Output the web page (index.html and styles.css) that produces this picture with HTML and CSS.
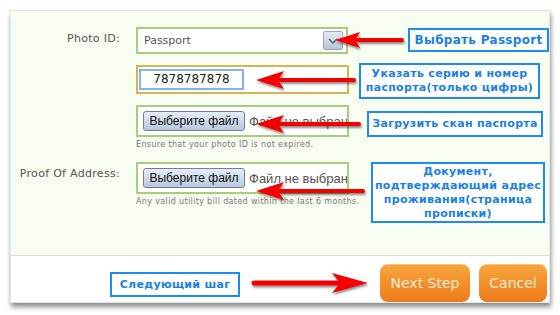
FILE: index.html
```html
<!DOCTYPE html>
<html lang="ru">

<head>
    <meta charset="UTF-8">
    <title>Verification</title>
    <link rel="stylesheet" href="styles.css">
</head>

<body>
    <div class="panel">
        <div class="form-area">
            <div class="row">
                <div class="label">Photo ID:</div>
                <div class="field">
                    <div class="select-box">
                        <span>Passport</span>
                        <span class="drop-btn">
                            <svg width="10" height="6" viewBox="0 0 10 6"><path d="M1 1 L5 5 L9 1" fill="none" stroke="#5a6a80" stroke-width="1.6"/></svg>
                        </span>
                    </div>
                </div>
            </div>
            <div class="row">
                <div class="label"></div>
                <div class="field">
                    <div class="number-box">
                        <div class="number-input">7878787878</div>
                    </div>
                </div>
            </div>
            <div class="row">
                <div class="label"></div>
                <div class="field">
                    <div class="file-box">
                        <span class="file-btn">Выберите файл</span>
                        <span class="file-name">Файл не выбран</span>
                    </div>
                    <div class="hint">Ensure that your photo ID is not expired.</div>
                </div>
            </div>
            <div class="row row-address">
                <div class="label">Proof Of Address:</div>
                <div class="field">
                    <div class="file-box">
                        <span class="file-btn">Выберите файл</span>
                        <span class="file-name">Файл не выбран</span>
                    </div>
                    <div class="hint">Any valid utility bill dated within the last 6 months.</div>
                </div>
            </div>
        </div>
        <div class="footer">
            <div class="btn">Next Step</div>
            <div class="btn btn-cancel">Cancel</div>
        </div>
    </div>

    <!-- подсказки поверх формы -->
    <div class="note note-1">Выбрать Passport</div>
    <div class="note note-2">Указать серию и номер<br>паспорта(только цифры)</div>
    <div class="note note-3">Загрузить скан паспорта</div>
    <div class="note note-4">Документ,<br>подтверждающий адрес<br>проживания(страница<br>прописки)</div>
    <div class="note note-5">Следующий шаг</div>

    <svg class="arrows" width="560" height="315" viewBox="0 0 560 315">
        <defs>
            <filter id="shadow" x="-10%" y="-50%" width="130%" height="250%">
                <feDropShadow dx="1" dy="2" stdDeviation="1.2" flood-color="#000" flood-opacity="0.45"/>
            </filter>
        </defs>
        <g fill="#f40000" stroke="#f40000" filter="url(#shadow)">
            <!-- 1 -->
            <line x1="352" y1="40" x2="402" y2="40" stroke-width="4" stroke-linecap="round"/>
            <polygon points="335,40 360,32 355,40 360,48" stroke="none"/>
            <!-- 2 -->
            <line x1="276" y1="80" x2="354" y2="80" stroke-width="4" stroke-linecap="round"/>
            <polygon points="256,80 284,71 278,80 284,89" stroke="none"/>
            <!-- 3 -->
            <line x1="276" y1="124" x2="359" y2="124" stroke-width="4" stroke-linecap="round"/>
            <polygon points="256,124 284,115 278,124 284,133" stroke="none"/>
            <!-- 4 -->
            <line x1="276" y1="191" x2="363" y2="191" stroke-width="4" stroke-linecap="round"/>
            <polygon points="256,191 284,182 278,191 284,200" stroke="none"/>
            <!-- 5 -->
            <line x1="254" y1="283" x2="345" y2="283" stroke-width="5" stroke-linecap="round"/>
            <polygon points="368,283 332,273 340,283 332,293" stroke="none"/>
        </g>
    </svg>
</body>

</html>
```

FILE: styles.css
```css
* {
    margin: 0;
    padding: 0;
    box-sizing: border-box;
}

body {
    position: relative;
    width: 560px;
    height: 315px;
    background: #fff;
    font-family: "DejaVu Sans", Verdana, sans-serif;
    overflow: hidden;
    padding: 10px 0 0 10px;
}

.panel {
    width: 540px;
    height: 293px;
    border: 1px solid #e2e6de;
    background: #fff;
    box-shadow: 1px 4px 5px rgba(0, 0, 0, 0.45);
    display: flex;
    flex-direction: column;
}

.form-area {
    height: 245px;
    background: #f7fdf0;
    border-bottom: 1px solid #dcdfd8;
    padding-top: 16px;
}

.row {
    display: flex;
    margin-bottom: 11px;
}

.row-address {
    margin-top: 13px;
}

.label {
    width: 109px;
    text-align: right;
    font-size: 11px;
    letter-spacing: 0.3px;
    color: #555;
    padding-top: 5px;
    flex-shrink: 0;
}

.field {
    margin-left: 16px;
}

.select-box {
    width: 212px;
    height: 27px;
    border: 2px solid #a5cf78;
    background: #fff;
    display: flex;
    align-items: center;
    justify-content: space-between;
    padding: 0 3px 0 6px;
    font-size: 11px;
    color: #555;
}

.drop-btn {
    width: 20px;
    height: 19px;
    border: 1px solid #9aa8bb;
    border-radius: 2px;
    background: linear-gradient(#e4eaf2, #b9c6d6);
    display: flex;
    align-items: center;
    justify-content: center;
}

.number-box {
    width: 213px;
    height: 29px;
    border: 2px solid #d3b653;
    background: #fff;
    padding: 2px 0 0 1px;
}

.number-input {
    width: 105px;
    height: 21px;
    border: 2px solid #80b4ea;
    font-size: 12px;
    color: #222;
    text-align: center;
    line-height: 17px;
}

.file-box {
    width: 213px;
    height: 32px;
    border: 2px solid #a5cf78;
    background: #fff;
    display: flex;
    align-items: center;
    padding-left: 5px;
    white-space: nowrap;
    overflow: hidden;
    font-family: "Liberation Sans", Arial, sans-serif;
    font-size: 12px;
}

.file-btn {
    width: 102px;
    height: 20px;
    border: 1px solid #6f809b;
    border-radius: 3px;
    background: linear-gradient(#e6edf7, #b9c8de);
    color: #111;
    text-align: center;
    line-height: 18px;
    flex-shrink: 0;
}

.file-name {
    margin-left: 4px;
    color: #555;
    font-size: 13px;
}

.hint {
    font-size: 8px;
    letter-spacing: 0.35px;
    color: #777;
    margin-top: 3px;
}

.footer {
    flex: 1;
    display: flex;
    justify-content: flex-end;
    align-items: flex-end;
    gap: 9px;
    padding: 0 2px 0 0;
}

.btn {
    width: 90px;
    height: 38px;
    border-radius: 8px;
    background: linear-gradient(#f7a63d, #ec7a1b);
    color: #fde9d4;
    font-size: 14px;
    display: flex;
    align-items: center;
    justify-content: center;
    box-shadow: inset 0 1px 0 rgba(255, 255, 255, 0.3);
}

.btn-cancel {
    width: 68px;
}

.note {
    position: absolute;
    background: #fff;
    border: 2px solid #1b8cf5;
    color: #1a80e6;
    font-size: 11px;
    font-weight: bold;
    letter-spacing: 0.3px;
    text-align: center;
    line-height: 14px;
    display: flex;
    align-items: center;
    justify-content: center;
}

.note-1 {
    left: 408px;
    top: 28px;
    width: 141px;
    height: 24px;
    font-size: 12px;
}

.note-2 {
    left: 359px;
    top: 63px;
    width: 181px;
    height: 36px;
}

.note-3 {
    left: 367px;
    top: 111px;
    width: 176px;
    height: 26px;
}

.note-4 {
    left: 371px;
    top: 162px;
    width: 174px;
    height: 61px;
}

.note-5 {
    left: 110px;
    top: 272px;
    width: 130px;
    height: 25px;
}

.arrows {
    position: absolute;
    left: 0;
    top: 0;
}
```
